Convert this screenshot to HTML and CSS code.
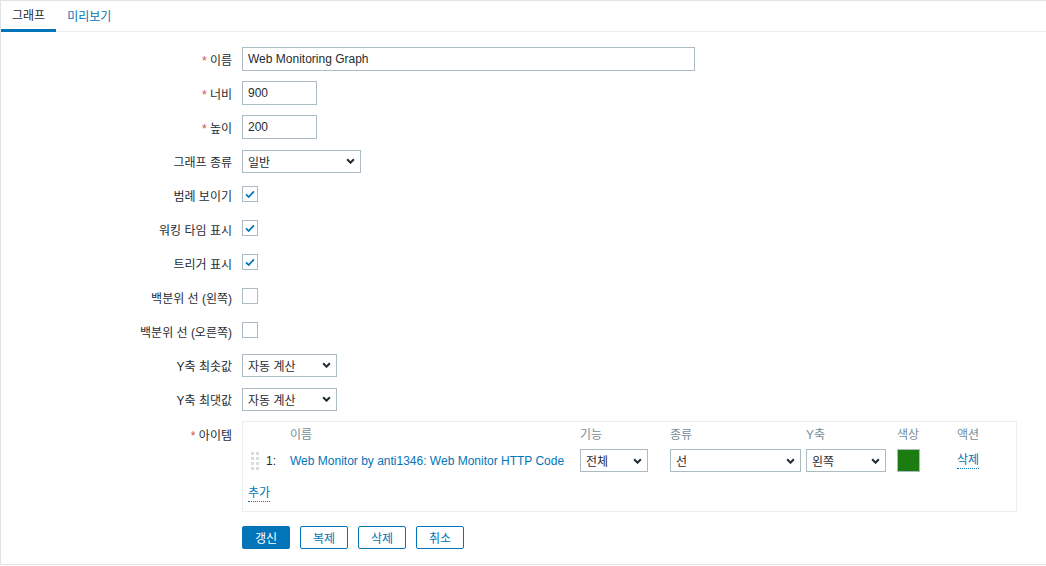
FILE: index.html
```html
<!DOCTYPE html>
<html lang="ko">
<head>
    <meta charset="UTF-8">
    <title>그래프</title>
    <link rel="stylesheet" href="styles.css">
</head>
<body>
<section class="wrap">
    <ul class="tabs">
        <li class="active"><a>그래프</a></li>
        <li><a>미리보기</a></li>
    </ul>
    <div class="form">
        <div class="row">
            <label class="lbl"><em>*</em> 이름</label>
            <div class="fld"><span class="input w-name">Web Monitoring Graph</span></div>
        </div>
        <div class="row">
            <label class="lbl"><em>*</em> 너비</label>
            <div class="fld"><span class="input w-num">900</span></div>
        </div>
        <div class="row">
            <label class="lbl"><em>*</em> 높이</label>
            <div class="fld"><span class="input w-num">200</span></div>
        </div>
        <div class="row">
            <label class="lbl">그래프 종류</label>
            <div class="fld">
                <span class="select w-type">일반<svg class="chev" viewBox="0 0 8 5"><path d="M1 1l3 3 3-3"/></svg></span>
            </div>
        </div>
        <div class="row">
            <label class="lbl">범례 보이기</label>
            <div class="fld"><span class="check on"><svg viewBox="0 0 16 16"><path d="M3.5 8.5l3 3 6-6.5"/></svg></span></div>
        </div>
        <div class="row">
            <label class="lbl">워킹 타임 표시</label>
            <div class="fld"><span class="check on"><svg viewBox="0 0 16 16"><path d="M3.5 8.5l3 3 6-6.5"/></svg></span></div>
        </div>
        <div class="row">
            <label class="lbl">트리거 표시</label>
            <div class="fld"><span class="check on"><svg viewBox="0 0 16 16"><path d="M3.5 8.5l3 3 6-6.5"/></svg></span></div>
        </div>
        <div class="row">
            <label class="lbl">백분위 선 (왼쪽)</label>
            <div class="fld"><span class="check"></span></div>
        </div>
        <div class="row">
            <label class="lbl">백분위 선 (오른쪽)</label>
            <div class="fld"><span class="check"></span></div>
        </div>
        <div class="row">
            <label class="lbl">Y축 최솟값</label>
            <div class="fld">
                <span class="select w-y">자동 계산<svg class="chev" viewBox="0 0 8 5"><path d="M1 1l3 3 3-3"/></svg></span>
            </div>
        </div>
        <div class="row">
            <label class="lbl">Y축 최댓값</label>
            <div class="fld">
                <span class="select w-y">자동 계산<svg class="chev" viewBox="0 0 8 5"><path d="M1 1l3 3 3-3"/></svg></span>
            </div>
        </div>
        <div class="row row-top">
            <label class="lbl lbl-top"><em>*</em> 아이템</label>
            <div class="fld">
                <div class="items">
                    <div class="grid head">
                        <span></span>
                        <span></span>
                        <span>이름</span>
                        <span>기능</span>
                        <span>종류</span>
                        <span>Y축</span>
                        <span>색상</span>
                        <span>액션</span>
                    </div>
                    <div class="grid item">
                        <span class="drag"><svg viewBox="0 0 8 18"><g fill="#d5dde1">
                            <rect x="0" y="0" width="3" height="3"/><rect x="5" y="0" width="3" height="3"/>
                            <rect x="0" y="5" width="3" height="3"/><rect x="5" y="5" width="3" height="3"/>
                            <rect x="0" y="10" width="3" height="3"/><rect x="5" y="10" width="3" height="3"/>
                            <rect x="0" y="15" width="3" height="3"/><rect x="5" y="15" width="3" height="3"/>
                        </g></svg></span>
                        <span class="num">1:</span>
                        <a class="link">Web Monitor by anti1346: Web Monitor HTTP Code</a>
                        <span class="select w-func">전체<svg class="chev" viewBox="0 0 8 5"><path d="M1 1l3 3 3-3"/></svg></span>
                        <span class="select w-draw">선<svg class="chev" viewBox="0 0 8 5"><path d="M1 1l3 3 3-3"/></svg></span>
                        <span class="select w-axis">왼쪽<svg class="chev" viewBox="0 0 8 5"><path d="M1 1l3 3 3-3"/></svg></span>
                        <span class="swatch"></span>
                        <a class="action">삭제</a>
                    </div>
                    <a class="action add">추가</a>
                </div>
            </div>
        </div>
        <div class="buttons">
            <button class="btn main">갱신</button>
            <button class="btn">복제</button>
            <button class="btn">삭제</button>
            <button class="btn">취소</button>
        </div>
    </div>
</section>
</body>
</html>
```

FILE: styles.css
```css
body{margin: 0; background: #fff;}
body *{font-family: "Liberation Sans", Arial, "Noto Sans CJK KR", sans-serif;}
ul{margin: 0; padding: 0; list-style: none;}
a{text-decoration: none; cursor: pointer;}

.wrap{border: 1px solid #dfe4e7; border-right: 0; height: 563px; box-sizing: content-box; color: #1f2c33; font-size: 12px;}

.tabs{display: flex; height: 30px; border-bottom: 1px solid #ebeef0;}
.tabs li{display: flex; align-items: center; padding: 0 11px; margin-bottom: -1px;}
.tabs li a{color: #0275b8; line-height: 28px;}
.tabs li.active{border-bottom: 3px solid #0275b8; padding-top: 1px;}
.tabs li.active a{color: #1f2c33;}

.form{padding-top: 15px;}
.row{display: flex; align-items: center; min-height: 24px; margin-bottom: 10px;}
.row-top{align-items: flex-start;}
.lbl{width: 231px; padding-right: 10px; text-align: right; flex: none;}
.lbl em{color: #d64e4e; font-style: normal;}
.lbl-top{padding-top: 5px;}
.fld{flex: none; display: flex; align-items: center;}

.input, .select{display: flex; align-items: center; box-sizing: border-box; height: 24px; border: 1px solid #acbbc2; padding: 0 5px; background: #fff; color: #1f2c33; white-space: nowrap;}
.select{height: 23px; justify-content: space-between;}
.chev{width: 9px; height: 6px; fill: none; stroke: #1f2c33; stroke-width: 1.8; margin-left: 6px;}
.w-name{width: 453px;}
.w-num{width: 75px;}
.w-type{width: 119px;}
.w-y{width: 95px;}
.w-func{width: 68px;}
.w-draw{width: 131px;}
.w-axis{width: 80px;}

.check{width: 16px; height: 16px; box-sizing: border-box; border: 1px solid #acbbc2; background: #fff; display: flex; margin-top: -2px;}
.check svg{width: 14px; height: 14px; fill: none; stroke: #0275b8; stroke-width: 2;}

.items{width: 775px; box-sizing: border-box; border: 1px solid #ebeef0; padding: 0 5px 9px;}
.grid{display: grid; grid-template-columns: 18px 24px 290px 90px 136px 91px 60px auto; align-items: center;}
.head{height: 22px; color: #768d99;}
.item{padding: 5px 0 4px;}
.drag{display: flex; padding-left: 3px;}
.drag svg{width: 8px; height: 18px;}
.num{color: #1f2c33;}
.link{color: #0275b8;}
.swatch{width: 23px; height: 23px; box-sizing: border-box; border: 1px solid #acbbc2; background: #1a7c11;}
.action{color: #0275b8; border-bottom: 1px dotted #0275b8; justify-self: start; line-height: 15px;}
.add{display: inline-block; margin-top: 10px;}

.buttons{display: flex; gap: 10px; padding-left: 241px; margin-top: 14px;}
.btn{height: 23px; width: 48px; padding: 0; border: 1px solid #0275b8; border-radius: 2px; background: #fff; color: #0275b8; font-size: 12px;}
.btn.main{background: #0275b8; color: #fff;}
```
